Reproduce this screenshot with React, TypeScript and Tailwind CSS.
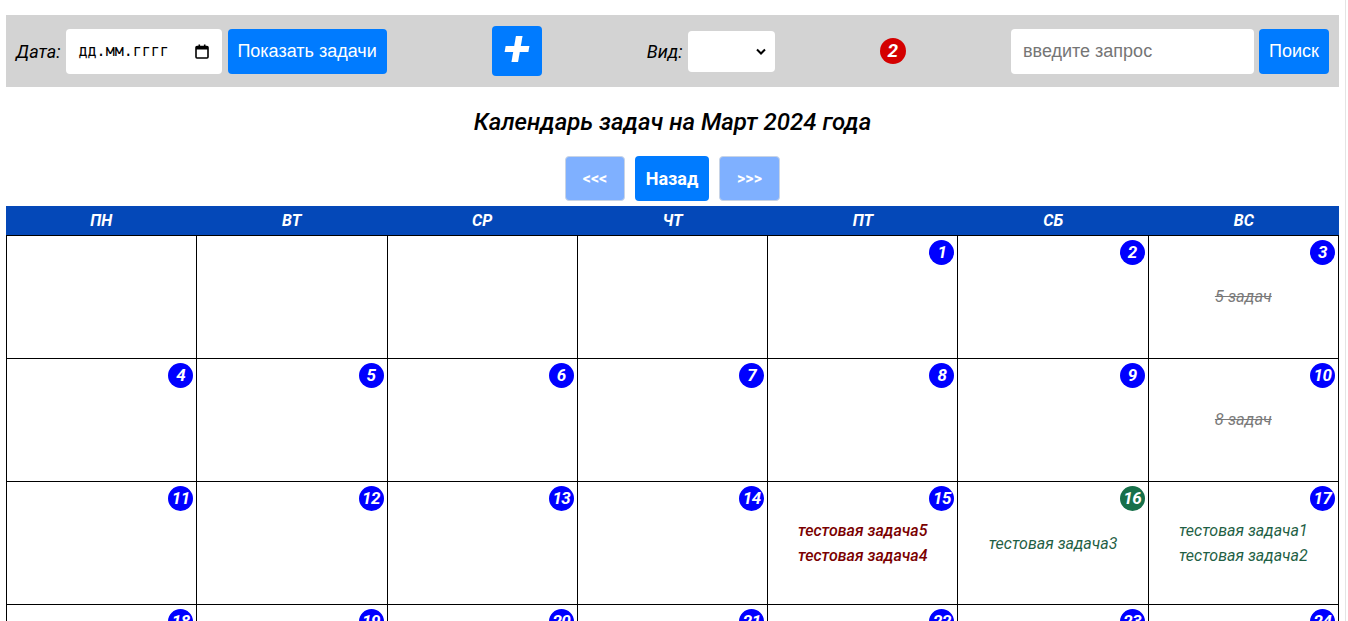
import React from "react";

type Task = { text: string; kind: "done" | "red" | "green" };
type Day = { n: number; green?: boolean; tasks?: Task[] };

const days: (Day | null)[] = [
  null, null, null, null,
  { n: 1 }, { n: 2 }, { n: 3, tasks: [{ text: "5 задач", kind: "done" }] },
  { n: 4 }, { n: 5 }, { n: 6 }, { n: 7 }, { n: 8 }, { n: 9 },
  { n: 10, tasks: [{ text: "8 задач", kind: "done" }] },
  { n: 11 }, { n: 12 }, { n: 13 }, { n: 14 },
  { n: 15, tasks: [{ text: "тестовая задача5", kind: "red" }, { text: "тестовая задача4", kind: "red" }] },
  { n: 16, green: true, tasks: [{ text: "тестовая задача3", kind: "green" }] },
  { n: 17, tasks: [{ text: "тестовая задача1", kind: "green" }, { text: "тестовая задача2", kind: "green" }] },
  { n: 18 }, { n: 19 }, { n: 20 }, { n: 21 }, { n: 22 }, { n: 23 }, { n: 24 },
  { n: 25 }, { n: 26 }, { n: 27 }, { n: 28 }, { n: 29 }, { n: 30 }, { n: 31 },
];

const heads = ["ПН", "ВТ", "СР", "ЧТ", "ПТ", "СБ", "ВС"];

function TaskLine({ t }: { t: Task }) {
  if (t.kind === "done")
    return <div className="text-[16.5px] leading-[24px] italic text-[#7a7a7a] line-through">{t.text}</div>;
  if (t.kind === "red")
    return <div className="text-[16px] leading-[25px] italic font-medium text-[#7a0000]">{t.text}</div>;
  return <div className="text-[16px] leading-[25px] italic text-[#1f5f45]">{t.text}</div>;
}

export default function App() {
  return (
    <div className="flex h-[621px] overflow-hidden bg-white" style={{ fontFamily: "Roboto, 'Liberation Sans', sans-serif" }}>
      <div className="flex-1 pl-[6px] pr-[6px] pt-[15px]">
        {/* toolbar */}
        <div className="h-[72px] bg-[#d3d3d3] flex items-center justify-between px-[10px]">
          <div className="flex items-center">
            <span className="italic text-[18px] text-black mr-[5px]">Дата:</span>
            <div className="w-[156px] h-[45px] bg-white rounded-[4px] flex items-center justify-between pl-[13px] pr-[13px]">
              <span className="text-[15px] text-black" style={{ fontFamily: "'DejaVu Sans Mono', 'Liberation Mono', monospace" }}>дд.мм.гггг</span>
              <svg width="14" height="15" viewBox="0 0 14 15">
                <rect x="1" y="2.5" width="12" height="11.5" rx="1" fill="none" stroke="#000" strokeWidth="1.6" />
                <rect x="1" y="2.5" width="12" height="3" fill="#000" />
                <rect x="3.5" y="0.5" width="1.6" height="3" fill="#000" />
                <rect x="8.9" y="0.5" width="1.6" height="3" fill="#000" />
              </svg>
            </div>
            <button className="ml-[6px] h-[45px] w-[159px] bg-[#007bff] text-white rounded-[4px] text-[18px]" style={{ fontFamily: "'Liberation Sans', Arial, sans-serif" }}>
              Показать задачи
            </button>
          </div>
          <button className="w-[50px] h-[50px] bg-[#007bff] rounded-[4px] flex items-center justify-center text-white text-[50px] font-bold italic leading-none">
            <span className="-mt-[5px]">+</span>
          </button>
          <div className="flex items-center">
            <span className="italic text-[18px] text-black mr-[5px]">Вид:</span>
            <div className="w-[87px] h-[41px] bg-white rounded-[4px] flex items-center justify-end pr-[9px]">
              <svg width="10" height="7" viewBox="0 0 10 7">
                <path d="M1 1.5 L5 5.5 L9 1.5" fill="none" stroke="#000" strokeWidth="2" />
              </svg>
            </div>
          </div>
          <div className="w-[26px] h-[26px] rounded-full bg-[#d40000] flex items-center justify-center text-white font-bold italic text-[19px]">
            2
          </div>
          <div className="flex items-center">
            <div className="w-[243px] h-[45px] bg-white rounded-[4px] flex items-center pl-[12px] text-[18px] text-[#757575]" style={{ fontFamily: "'Liberation Sans', Arial, sans-serif" }}>
              введите запрос
            </div>
            <button className="ml-[5px] w-[70px] h-[45px] bg-[#007bff] text-white rounded-[4px] text-[18px]" style={{ fontFamily: "'Liberation Sans', Arial, sans-serif" }}>
              Поиск
            </button>
          </div>
        </div>

        {/* title */}
        <div className="mt-[21px] text-center italic font-medium text-[24px] leading-[28px] text-black">
          Календарь задач на Март 2024 года
        </div>

        {/* nav */}
        <div className="mt-[20px] flex justify-center gap-[10px]">
          <button className="w-[60px] h-[45px] bg-[#7fb0ff] border border-[#c8d4e6] rounded-[4px] text-white font-bold text-[16px]">&lt;&lt;&lt;</button>
          <button className="w-[74px] h-[45px] bg-[#007bff] rounded-[4px] text-white font-bold text-[18px]">Назад</button>
          <button className="w-[61px] h-[45px] bg-[#7fb0ff] border border-[#c8d4e6] rounded-[4px] text-white font-bold text-[16px]">&gt;&gt;&gt;</button>
        </div>

        {/* calendar */}
        <div className="mt-[5px]">
          <div className="grid grid-cols-7 bg-[#0448b8] h-[29px]">
            {heads.map((h) => (
              <div key={h} className="flex items-center justify-center text-white font-bold italic text-[16px]">{h}</div>
            ))}
          </div>
          <div className="grid grid-cols-7 border-t border-l border-black">
            {days.map((d, i) => (
              <div key={i} className="relative h-[123px] border-r border-b border-black flex flex-col items-center justify-center">
                {d && (
                  <div className={`absolute top-[4px] right-[3px] w-[25px] h-[25px] rounded-full flex items-center justify-center text-white font-bold italic text-[17px] tracking-[-0.5px] ${d.green ? "bg-[#17704a]" : "bg-[#0000ff]"}`}>
                    {d.n}
                  </div>
                )}
                {d?.tasks && (
                  <div className="flex flex-col items-center">
                    {d.tasks.map((t, j) => (
                      <TaskLine key={j} t={t} />
                    ))}
                  </div>
                )}
              </div>
            ))}
          </div>
        </div>
      </div>
      <div className="w-[3px] border-l border-[#e4e4e4]" />
    </div>
  );
}
